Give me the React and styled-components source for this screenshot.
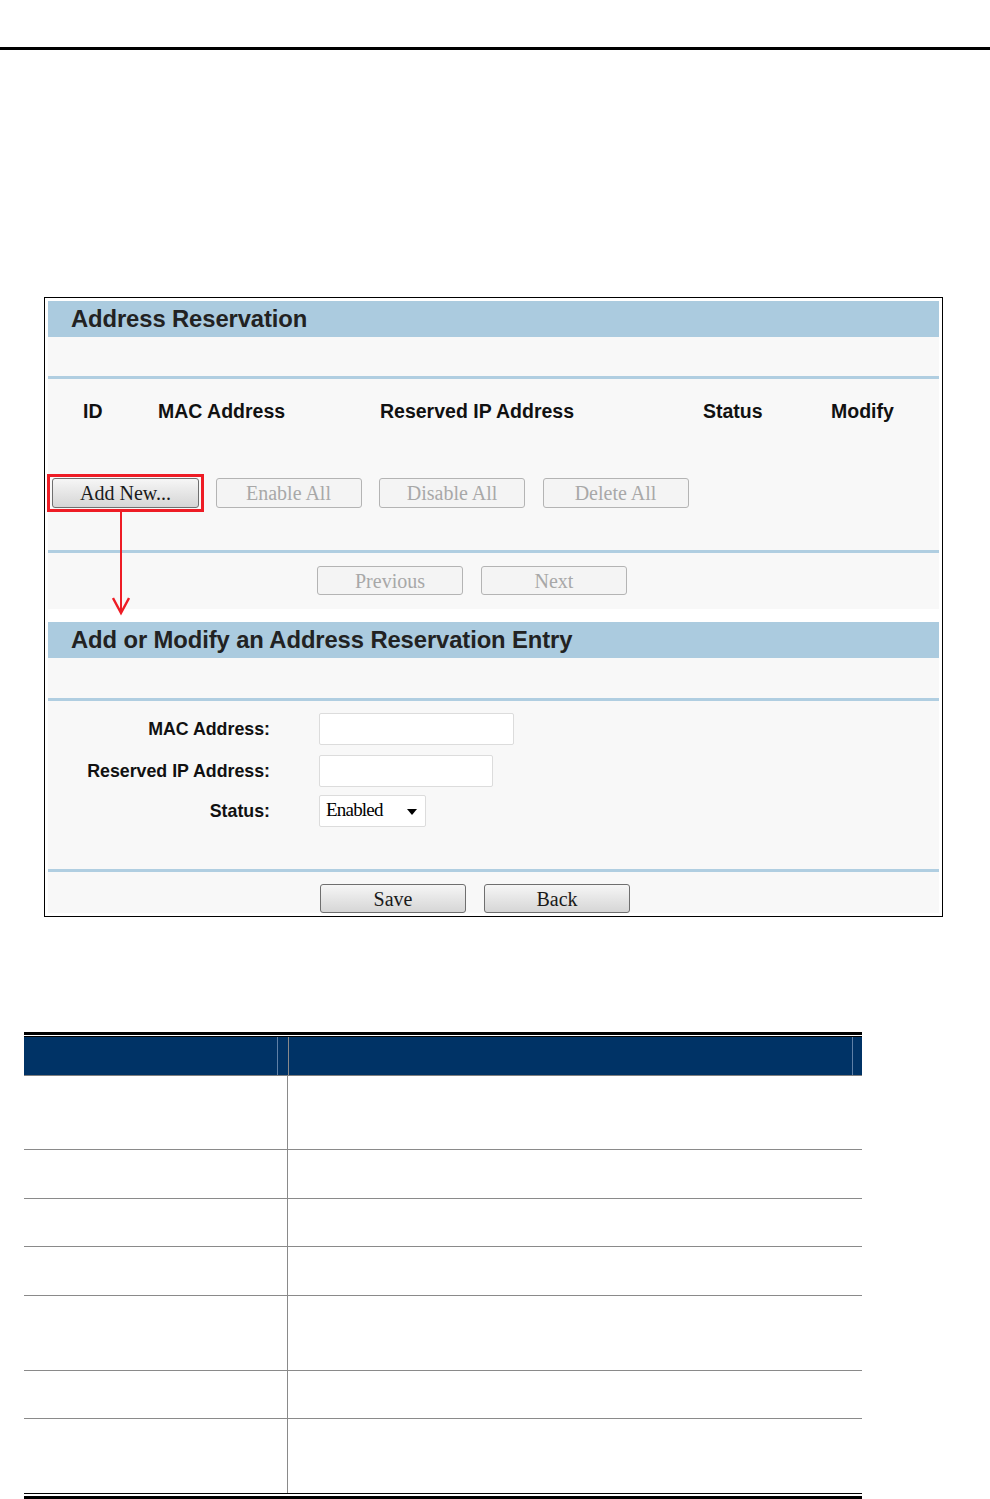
import styled, { createGlobalStyle } from 'styled-components';

const GlobalStyle = createGlobalStyle`
  body {
    margin: 0;
    background: #ffffff;
    font-family: "Liberation Sans", Arial, sans-serif;
  }
`;

const columns = [
  { label: 'ID', width: 75 },
  { label: 'MAC Address', width: 222 },
  { label: 'Reserved IP Address', width: 323 },
  { label: 'Status', width: 128 },
  { label: 'Modify', width: 100 },
];

const bulkActions = ['Enable All', 'Disable All', 'Delete All'];

const formRows = [
  { label: 'MAC Address:', width: 195 },
  { label: 'Reserved IP Address:', width: 174 },
];

const tableRows = [74, 49, 48, 49, 75, 48, 75];

export default function App() {
  return (
    <>
      <GlobalStyle />
      <TopRule />
      <Frame>
        <Section>
          <SectionTitle>Address Reservation</SectionTitle>
          <Spacer $h={39} />
          <BlueLine />
          <ColumnRow>
            {columns.map((c) => (
              <ColumnHead key={c.label} $w={c.width}>{c.label}</ColumnHead>
            ))}
          </ColumnRow>
          <ActionRow>
            <Highlight>
              <Button $wide>Add New...</Button>
            </Highlight>
            {bulkActions.map((a) => (
              <Button key={a} disabled>{a}</Button>
            ))}
          </ActionRow>
          <BlueLine />
          <NavRow>
            <Button disabled>Previous</Button>
            <Button disabled>Next</Button>
          </NavRow>
        </Section>
        <Gap />
        <Section>
          <SectionTitle>Add or Modify an Address Reservation Entry</SectionTitle>
          <Spacer $h={40} />
          <BlueLine />
          <Form>
            {formRows.map((r) => (
              <FormRow key={r.label}>
                <FieldLabel>{r.label}</FieldLabel>
                <TextInput $w={r.width} />
              </FormRow>
            ))}
            <FormRow $tight>
              <FieldLabel>Status:</FieldLabel>
              <SelectBox>
                <span>Enabled</span>
                <Caret />
              </SelectBox>
            </FormRow>
          </Form>
          <BlueLine />
          <SaveRow>
            <Button>Save</Button>
            <Button>Back</Button>
          </SaveRow>
        </Section>
        <Arrow width="18" height="104" viewBox="0 0 18 104">
          <line x1="9" y1="0" x2="9" y2="101" stroke="#ee1c25" strokeWidth="2" />
          <polyline points="1,86 9,101 17,86" fill="none" stroke="#ee1c25" strokeWidth="2.4" />
        </Arrow>
      </Frame>

      <ParamTable>
        <HeadRow>
          <HeadCell $first />
          <HeadCell />
        </HeadRow>
        {tableRows.map((h, i) => (
          <BodyRow key={i} $h={h} $last={i === tableRows.length - 1}>
            <BodyCell $first />
            <BodyCell />
          </BodyRow>
        ))}
      </ParamTable>
    </>
  );
}

const TopRule = styled.div`
  margin-top: 47px;
  height: 3px;
  background: #000;
`;

const Frame = styled.div`
  position: relative;
  margin: 247px 0 0 44px;
  width: 899px;
  box-sizing: border-box;
  border: 1px solid #000;
  padding: 3px;
  background: #fff;
`;

const Section = styled.div`
  background: #f8f8f8;
`;

const Gap = styled.div`
  height: 13px;
  background: #fff;
`;

const SectionTitle = styled.div`
  height: 36px;
  display: flex;
  align-items: center;
  padding-left: 23px;
  background: #abcbdf;
  color: #222;
  font-weight: bold;
  font-size: 23.8px;
  letter-spacing: -0.1px;
`;

const Spacer = styled.div`
  height: ${(p) => p.$h}px;
`;

const BlueLine = styled.div`
  height: 3px;
  background: #b0cee1;
`;

const ColumnRow = styled.div`
  height: 64px;
  display: flex;
  align-items: center;
  padding-left: 35px;
`;

const ColumnHead = styled.div`
  width: ${(p) => p.$w}px;
  flex-shrink: 0;
  font-weight: bold;
  font-size: 19.5px;
  color: #111;
`;

const ActionRow = styled.div`
  display: flex;
  align-items: center;
  gap: 17.5px;
  margin-top: 31px;
  margin-bottom: 38px;
  height: 38px;
`;

const Highlight = styled.div`
  display: flex;
  align-items: center;
  height: 38px;
  box-sizing: border-box;
  border: 3px solid #ee1c25;
  padding: 0 2px;
  margin-left: -1px;
  margin-right: -6px;
`;

const Button = styled.button`
  width: ${(p) => (p.$wide ? 147 : 146)}px;
  height: 30px;
  padding: 0;
  box-sizing: border-box;
  border-radius: 3px;
  border: 1px solid ${(p) => (p.disabled ? '#b4b4b4' : '#6f6f6f')};
  background: ${(p) => (p.disabled ? '#f4f4f4' : 'linear-gradient(#f6f6f6, #e4e4e4 55%, #d6d6d6)')};
  color: ${(p) => (p.disabled ? '#a8a8a8' : '#1a1a1a')};
  font-family: "Liberation Serif", "Times New Roman", serif;
  font-size: 20px;
  line-height: 28px;
`;

const NavRow = styled.div`
  display: flex;
  gap: 18px;
  padding: 13px 0 14px 269px;
  & > button {
    height: 29px;
  }
`;

const Form = styled.div`
  display: flex;
  flex-direction: column;
  gap: 10px;
  padding: 12px 0 42px;
`;

const FormRow = styled.div`
  display: flex;
  align-items: center;
  gap: 49px;
  margin-top: ${(p) => (p.$tight ? -2 : 0)}px;
`;

const FieldLabel = styled.div`
  width: 222px;
  text-align: right;
  font-weight: bold;
  font-size: 17.8px;
  color: #111;
`;

const TextInput = styled.div`
  width: ${(p) => p.$w}px;
  height: 32px;
  box-sizing: border-box;
  border: 1px solid #dcdcdc;
  border-radius: 2px;
  background: #fff;
`;

const SelectBox = styled.div`
  width: 107px;
  height: 32px;
  box-sizing: border-box;
  border: 1px solid #dcdcdc;
  border-radius: 2px;
  background: #fff;
  display: flex;
  align-items: center;
  justify-content: space-between;
  padding: 0 8px 2px 6px;
  font-family: "Liberation Serif", "Times New Roman", serif;
  font-size: 19px;
  letter-spacing: -0.8px;
  color: #000;
`;

const Caret = styled.span`
  width: 0;
  height: 0;
  margin-top: 4px;
  border-left: 5px solid transparent;
  border-right: 5px solid transparent;
  border-top: 6px solid #000;
`;

const SaveRow = styled.div`
  display: flex;
  gap: 18px;
  padding: 12px 0 0 272px;
  & > button {
    height: 29px;
  }
`;

const Arrow = styled.svg`
  position: absolute;
  left: 67px;
  top: 214px;
`;

const ParamTable = styled.div`
  margin: 115px 0 0 24px;
  width: 838px;
  border-top: 3px solid #000;
  padding-top: 1px;
  padding-bottom: 2px;
  border-bottom: 4px solid #000;
`;

const HeadRow = styled.div`
  display: grid;
  grid-template-columns: 264px 1fr;
  height: 38px;
  border-top: 1px solid #000;
  border-bottom: 1px solid #808080;
  background: #003366;
`;

const HeadCell = styled.div`
  border-right: 1px solid #5f80a6;
  margin-right: ${(p) => (p.$first ? 10 : 9)}px;
  & + & {
    border-left: 1px solid #8a8a8a;
  }
`;

const BodyRow = styled.div`
  display: grid;
  grid-template-columns: 264px 1fr;
  height: ${(p) => p.$h}px;
  box-sizing: border-box;
  border-bottom: ${(p) => (p.$last ? '1px solid #000' : '1px solid #8a8a8a')};
`;

const BodyCell = styled.div`
  border-right: ${(p) => (p.$first ? '1px solid #8a8a8a' : 'none')};
`;
